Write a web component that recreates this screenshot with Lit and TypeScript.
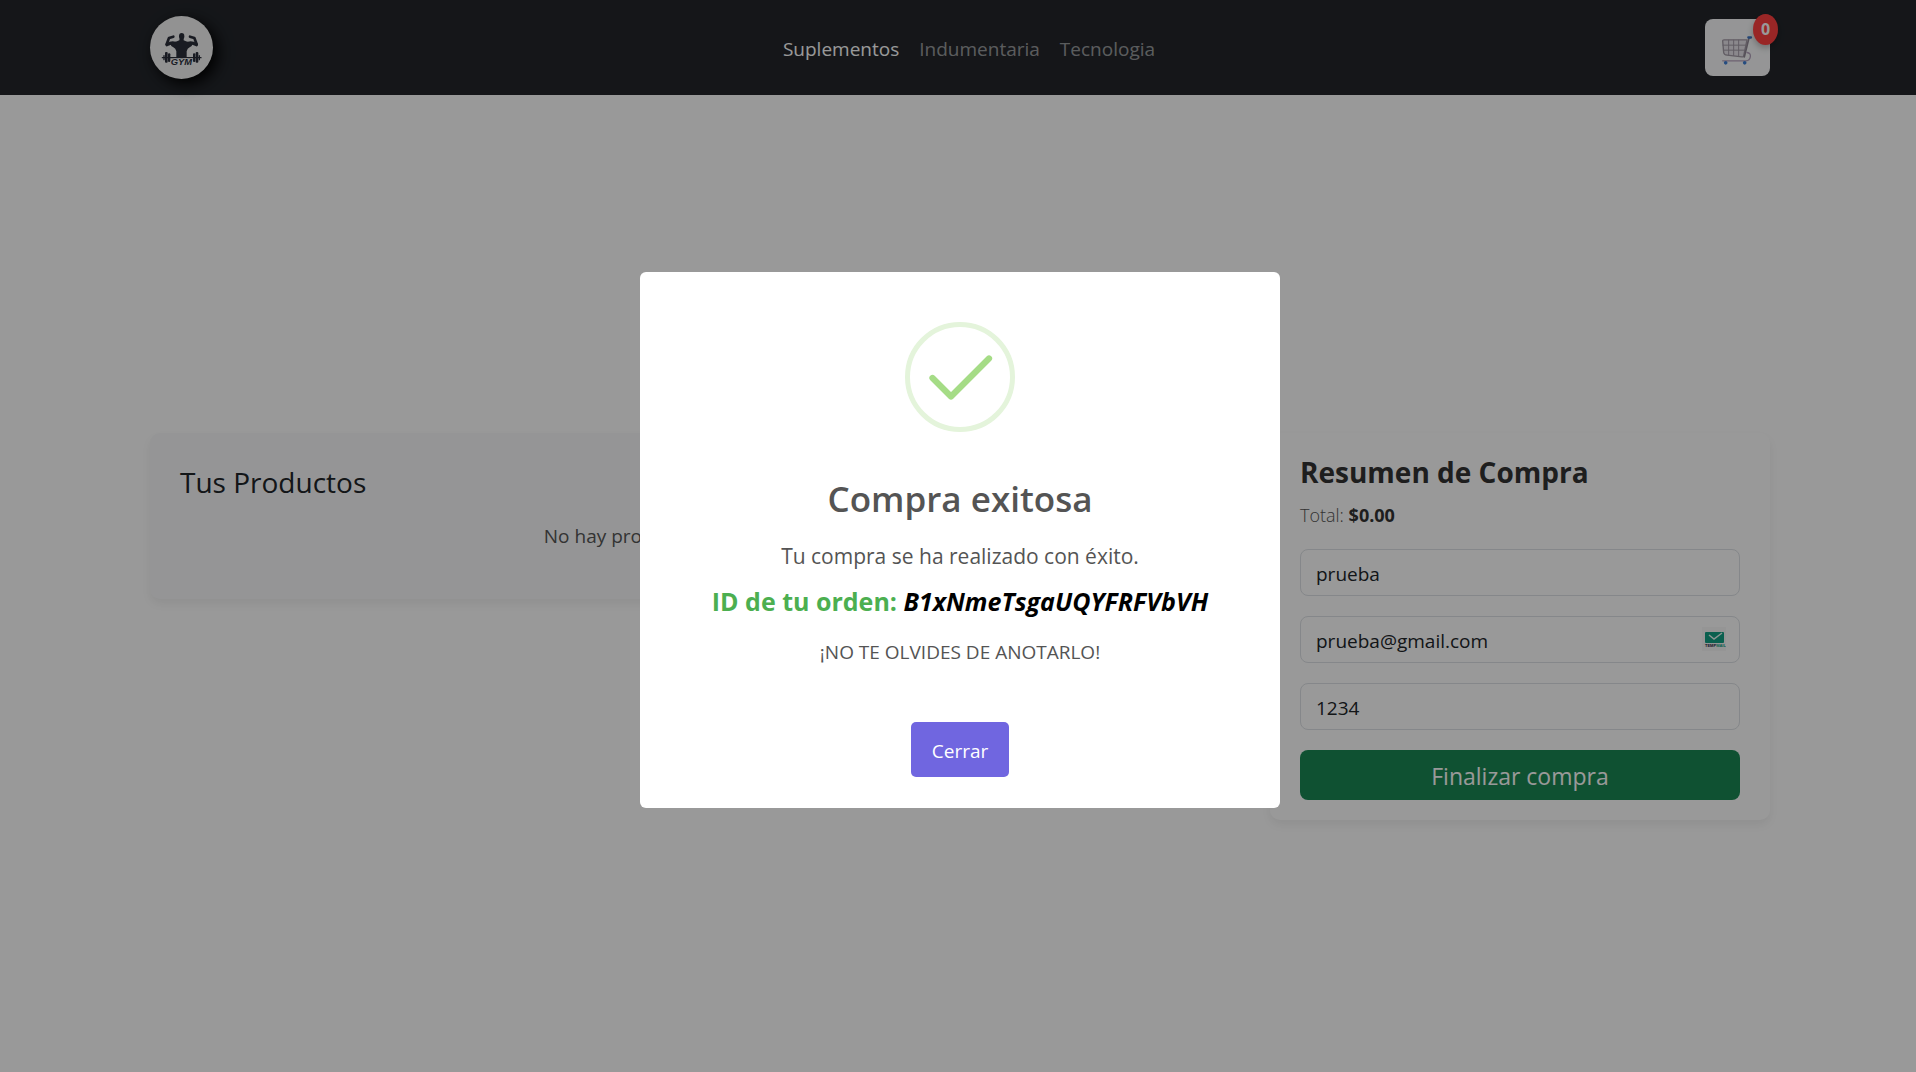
import { LitElement, html, css, svg } from "lit";
import { customElement, property, state } from "lit/decorators.js";

const fontStack = css`"Segoe UI", "Open Sans", "Noto Sans", sans-serif`;

const gymLogo = svg`
  <svg viewBox="30 48 189 189" width="63" height="63" aria-hidden="true">
    <g fill="#2b2e3a">
      <ellipse cx="125" cy="109" rx="8" ry="10"/>
      <path d="M119 115h12v6q7 3 14 5q10 0 12 6q0 8-8 10q-7 3-9 12v18h-31v-18q-2-9-9-12q-8-2-8-10q2-6 12-6q7-2 14-5z"/>
      <path d="M105 130q-10-4-24 4" stroke="#2b2e3a" stroke-width="10" stroke-linecap="round" fill="none"/>
      <path d="M145 130q10-4 24 4" stroke="#2b2e3a" stroke-width="10" stroke-linecap="round" fill="none"/>
      <path d="M80 133l7-19 13-4" stroke="#2b2e3a" stroke-width="8" stroke-linecap="round" stroke-linejoin="round" fill="none"/>
      <path d="M170 133l-7-19-13-4" stroke="#2b2e3a" stroke-width="8" stroke-linecap="round" stroke-linejoin="round" fill="none"/>
      <rect x="65" y="171" width="120" height="4" rx="2"/>
      <rect x="75" y="156" width="8" height="32" rx="3"/>
      <rect x="84" y="160" width="7" height="26" rx="3"/>
      <rect x="159" y="160" width="7" height="26" rx="3"/>
      <rect x="167" y="156" width="8" height="32" rx="3"/>
      <rect x="70" y="165" width="4" height="16" rx="2"/>
      <rect x="176" y="165" width="4" height="16" rx="2"/>
    </g>
    <text x="124" y="195" text-anchor="middle" font-family="Liberation Sans, sans-serif"
      font-size="28" font-weight="700" font-style="italic" fill="#2b2e3a"
      stroke="#f4f4f4" stroke-width="3" paint-order="stroke">GYM</text>
  </svg>`;

const cartIcon = svg`
  <svg viewBox="96 104 96 92" width="32" height="31" aria-hidden="true">
    <g fill="none" stroke-linecap="round" stroke-linejoin="round">
      <path d="M101 121q0-3 4-3h69l-10 48q-1 4-5 3l-45-5q-9-1-10-8z" fill="#e6e3ea" stroke="#a39ba6" stroke-width="4"/>
      <path d="M102 134h70M103 149h65M119 119v44M134 119v46M149 119v47" stroke="#a39ba6" stroke-width="3"/>
      <path d="M180 112l-14 57" stroke="#8f8794" stroke-width="5"/>
      <path d="M174 156q12 2 10 13q-2 11-13 12H101" stroke="#b5a3bd" stroke-width="4"/>
      <path d="M178 111h8" stroke="#3d76c6" stroke-width="7"/>
    </g>
    <circle cx="110" cy="187" r="5.500" fill="#3f7fd6"/>
    <circle cx="167" cy="187" r="5.500" fill="#3f7fd6"/>
  </svg>`;

const tempMailIcon = svg`
  <svg viewBox="0 0 24 24" width="24" height="24" aria-hidden="true">
    <rect width="24" height="24" fill="#f8f8f8"/>
    <rect x="3" y="5" width="19" height="11" rx="1" fill="#12a084"/>
    <path d="M7 8l5 4 8-6" fill="none" stroke="#eafaf6" stroke-width="1.500"/>
    <text x="3" y="20" font-family="Liberation Sans, sans-serif" font-size="4" font-weight="700"
      fill="#1d2340">TEMP<tspan fill="#12a084">MAIL</tspan></text>
  </svg>`;

@customElement("site-header")
export class SiteHeader extends LitElement {
  @property({ type: Number }) count = 0;

  static styles = css`
    :host {
      display: block;
      background: #23262b;
      font-family: ${fontStack};
    }
    .bar {
      display: flex;
      align-items: center;
      justify-content: space-between;
      max-width: 1620px;
      height: 95px;
      margin: 0 auto;
      padding: 0 20px 0 24px;
    }
    .brand {
      display: block;
      width: 63px;
      height: 63px;
      margin-right: 20px;
      border-radius: 50%;
      background: #f4f4f4;
      box-shadow: 5px 5px 15px #000;
    }
    .brand svg {
      display: block;
    }
    .links {
      display: flex;
      gap: 20px;
      padding-top: 2px;
    }
    .link {
      color: rgba(255, 255, 255, 0.55);
      font-size: 19px;
      line-height: 30px;
      text-decoration: none;
    }
    .link.active {
      color: #fff;
    }
    .cart {
      position: relative;
      display: grid;
      place-items: center;
      width: 65px;
      height: 57px;
      padding: 6px 0 0;
      border: 0;
      border-radius: 8px;
      background: #f8f9fa;
    }
    .badge {
      position: absolute;
      top: -5px;
      right: -8px;
      width: 25px;
      height: 31px;
      border-radius: 50%;
      background: #ff4040;
      box-shadow: 0 3px 6px rgba(0, 0, 0, 0.25);
      color: #fff;
      font: 700 16px/31px ${fontStack};
      text-align: center;
    }
  `;

  private links = ["Suplementos", "Indumentaria", "Tecnologia"];

  render() {
    return html`
      <header class="bar">
        <a class="brand" href="#inicio" aria-label="Inicio">${gymLogo}</a>
        <nav class="links">
          ${this.links.map(
            (l, i) => html`<a class="link ${i === 0 ? "active" : ""}" href="#${l.toLowerCase()}">${l}</a>`
          )}
        </nav>
        <button class="cart" type="button" aria-label="Carrito">
          ${cartIcon}<span class="badge">${this.count}</span>
        </button>
      </header>
    `;
  }
}

@customElement("checkout-summary")
export class CheckoutSummary extends LitElement {
  static styles = css`
    :host {
      display: block;
      font-family: ${fontStack};
    }
    .card {
      box-sizing: border-box;
      padding: 20px 30px;
      border-radius: 10px;
      background: #fff;
      box-shadow: 0 5px 10px rgba(0, 0, 0, 0.06);
    }
    .title {
      margin: 0 0 9px;
      color: #333;
      font-size: 28px;
      font-weight: 700;
      line-height: 38px;
    }
    .total {
      margin: 0 0 19px;
      color: #555;
      font-size: 18px;
      font-weight: 300;
      line-height: 30px;
    }
    .total strong {
      color: #333;
      font-weight: 700;
    }
    .form {
      display: grid;
      gap: 20px;
    }
    .field {
      position: relative;
      display: block;
    }
    .field svg {
      position: absolute;
      top: 11px;
      right: 14px;
    }
    .input {
      display: block;
      box-sizing: border-box;
      width: 100%;
      height: 47px;
      padding: 2px 15px 0;
      border: 1px solid #dee2e6;
      border-radius: 8px;
      background: #fff;
      color: #212529;
      font: 400 19px/30px ${fontStack};
    }
    .submit {
      height: 50px;
      padding: 2px 0 0;
      border: 0;
      border-radius: 8px;
      background: #198754;
      color: #fff;
      font: 400 23px/36px ${fontStack};
    }
  `;

  render() {
    return html`
      <section class="card">
        <h2 class="title">Resumen de Compra</h2>
        <p class="total">Total: <strong>$0.00</strong></p>
        <form class="form" @submit=${(e: Event) => e.preventDefault()}>
          <label class="field"><input class="input" type="text" aria-label="Nombre" value="prueba" /></label>
          <label class="field">
            <input class="input" type="email" aria-label="Email" value="prueba@gmail.com" />${tempMailIcon}
          </label>
          <label class="field"><input class="input" type="tel" aria-label="Teléfono" value="1234" /></label>
          <button class="submit" type="submit">Finalizar compra</button>
        </form>
      </section>
    `;
  }
}

@customElement("order-dialog")
export class OrderDialog extends LitElement {
  @property() orderId = "";

  static styles = css`
    :host {
      position: fixed;
      inset: 0;
      display: grid;
      place-items: center;
      padding: 8px 0 0 4px;
      background: rgba(0, 0, 0, 0.4);
      font-family: ${fontStack};
    }
    .dialog {
      display: flex;
      flex-direction: column;
      align-items: center;
      box-sizing: border-box;
      width: 640px;
      max-width: 100%;
      padding: 50px 20px 31px;
      border-radius: 6px;
      background: #fff;
      color: #545454;
      text-align: center;
    }
    .title {
      margin: 39px 0 0;
      font-size: 35px;
      font-weight: 600;
      line-height: 56px;
    }
    .lead {
      margin: 12px 0 0;
      font-size: 21px;
      line-height: 34px;
    }
    .order {
      margin: 10px 0 0;
      color: #4caf50;
      font-size: 25px;
      font-weight: 700;
      line-height: 36px;
    }
    .order em {
      color: #000;
    }
    .note {
      margin: 18px 0 0;
      font-size: 19px;
      line-height: 30px;
    }
    .close {
      height: 55px;
      margin: 55px 0 0;
      padding: 2px 21px 0;
      border: 0;
      border-radius: 5px;
      background: #7066e0;
      color: #fff;
      font: 400 19px/30px ${fontStack};
    }
  `;

  render() {
    return html`
      <div class="dialog" role="dialog" aria-labelledby="title">
        <svg viewBox="0 0 110 110" width="110" height="110" aria-hidden="true">
          <circle cx="55" cy="55" r="52.500" fill="none" stroke="#e4f4db" stroke-width="5" />
          <path d="M27.500 56L46 74.500 84 36.500" fill="none" stroke="#a5dc86" stroke-width="6.250" stroke-linecap="round" stroke-linejoin="round" />
        </svg>
        <h2 class="title" id="title">Compra exitosa</h2>
        <p class="lead">Tu compra se ha realizado con éxito.</p>
        <p class="order">ID de tu orden: <em>${this.orderId}</em></p>
        <p class="note">¡NO TE OLVIDES DE ANOTARLO!</p>
        <button class="close" type="button" @click=${() => this.dispatchEvent(new CustomEvent("close"))}>Cerrar</button>
      </div>
    `;
  }
}

@customElement("app-root")
export class AppRoot extends LitElement {
  @state() private open = true;

  static styles = css`
    :host {
      display: flex;
      flex-direction: column;
      min-height: 100vh;
      background: #fff;
      font-family: ${fontStack};
    }
    .main {
      display: grid;
      flex: 1;
      align-content: center;
      padding: 86px 20px 0 24px;
    }
    .columns {
      display: grid;
      grid-template-columns: minmax(0, 1fr) minmax(0, 500px);
      align-items: start;
      gap: 20px;
      width: 100%;
      max-width: 1620px;
      margin: 0 auto;
    }
    .products {
      box-sizing: border-box;
      min-height: 166px;
      padding: 30px;
      border-radius: 10px;
      background: #f8f9fa;
      box-shadow: 0 5px 10px rgba(0, 0, 0, 0.06);
      color: #212529;
    }
    .heading {
      margin: 0 0 20px;
      font-size: 28px;
      font-weight: 400;
      line-height: 38px;
    }
    .empty {
      margin: 0;
      color: #555;
      font-size: 19px;
      line-height: 30px;
      text-align: center;
    }
  `;

  render() {
    return html`
      <site-header .count=${0}></site-header>
      <main class="main">
        <div class="columns">
          <section class="products">
            <h2 class="heading">Tus Productos</h2>
            <p class="empty">No hay productos en el carrito aún.</p>
          </section>
          <checkout-summary></checkout-summary>
        </div>
      </main>
      ${this.open
        ? html`<order-dialog .orderId=${"B1xNmeTsgaUQYFRFVbVH"} @close=${() => (this.open = false)}></order-dialog>`
        : null}
    `;
  }
}
